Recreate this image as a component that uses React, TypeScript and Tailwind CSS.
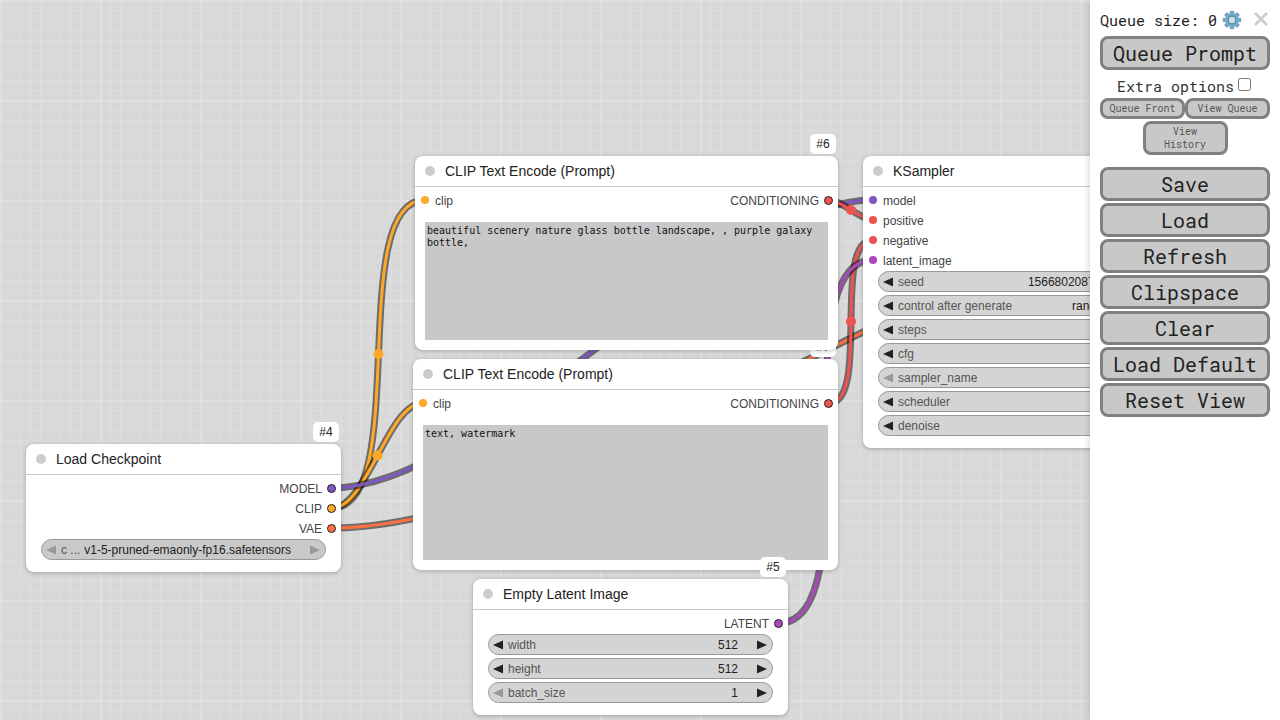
import React from "react";

const sans = "[font-family:'Liberation_Sans',Arial,sans-serif]";

function Arrow({ dir, off }: { dir: "l" | "r"; off?: boolean }) {
  return (
    <svg width="10" height="10" viewBox="0 0 10 10" className="shrink-0">
      <polygon points={dir === "l" ? "0,5 10,0.5 10,9.5" : "10,5 0,0.5 0,9.5"} fill={off ? "#999999" : "#222222"} />
    </svg>
  );
}

function Widget({ label, value, leftOff, rightOff, dark }: { label: string; value: string; leftOff?: boolean; rightOff?: boolean; dark?: boolean }) {
  return (
    <div className={`flex h-[21px] items-center rounded-full border border-[#999999] pl-[4px] pr-[5px] text-[12px] leading-none ${dark ? "bg-[#c9c9c9]" : "bg-[#d4d4d4]"}`}>
      <Arrow dir="l" off={leftOff} />
      <span className="ml-[5px] whitespace-nowrap text-[#555555]">{label}</span>
      <span className="ml-auto mr-[19px] whitespace-nowrap text-[#222222]">{value}</span>
      <Arrow dir="r" off={rightOff} />
    </div>
  );
}

function InSlot({ label, color }: { label: string; color: string }) {
  return (
    <div className="flex h-[20px] items-center gap-[6px] pl-[6px] text-[12px] text-[#444444]">
      <span className={`h-[8px] w-[8px] rounded-full ${color}`} />
      <span className="mt-[2px]">{label}</span>
    </div>
  );
}

function OutSlot({ label, color }: { label: string; color: string }) {
  return (
    <div className="flex h-[20px] items-center justify-end gap-[5px] pr-[5px] text-[12px] text-[#444444]">
      <span className="mt-[2px]">{label}</span>
      <span className={`h-[9px] w-[9px] rounded-full border border-[#222222] ${color}`} />
    </div>
  );
}

function Node({ id, title, className, children }: { id: string; title: string; className: string; children: React.ReactNode }) {
  return (
    <div className={`absolute rounded-[8px] bg-white shadow-[0_1px_4px_rgba(0,0,0,0.25)] ${sans} ${className}`}>
      <div className="absolute right-[2px] top-[-22px] flex h-[20px] w-[26px] items-center justify-center rounded-[5px] bg-white text-[12px] text-[#222222]">
        {id}
      </div>
      <div className="flex h-[31px] items-center gap-[10px] border-b border-[#c8c8c8] pl-[10px] text-[14px] text-[#222222]">
        <span className="h-[10px] w-[10px] rounded-full bg-[#cccccc]" />
        <span>{title}</span>
      </div>
      <div className="pt-[3px]">{children}</div>
    </div>
  );
}

function ClipBody({ text, heightClass }: { text: string; heightClass: string }) {
  return (
    <>
      <div className="grid grid-cols-2">
        <InSlot label="clip" color="bg-[#FFA726]" />
        <OutSlot label="CONDITIONING" color="bg-[#EF5350]" />
      </div>
      <div className={`mx-[10px] mb-[10px] mt-[12px] bg-[#c8c8c8] px-[2px] pt-[3px] [font-family:'DejaVu_Sans_Mono',monospace] text-[10px] leading-[12px] text-[#111111] ${heightClass}`}>
        {text}
      </div>
    </>
  );
}

function Link({ d, color, mid }: { d: string; color: string; mid?: [number, number] }) {
  return (
    <g fill="none">
      <path d={d} stroke="#000000" strokeOpacity="0.5" strokeWidth="7" />
      <path d={d} stroke={color} strokeWidth="3" />
      {mid && <circle cx={mid[0]} cy={mid[1]} r="5" fill={color} />}
    </g>
  );
}

function PanelButton({ children }: { children: React.ReactNode }) {
  return (
    <button className="h-[34px] w-[170px] rounded-[8px] border-[3px] border-[#808080] bg-[#c8c8c8] text-[20px] leading-none text-[#222222]">
      {children}
    </button>
  );
}

function SmallButton({ children, className }: { children: React.ReactNode; className: string }) {
  return (
    <button className={`w-[85px] rounded-[8px] border-[3px] border-[#808080] bg-[#c8c8c8] text-[10px] leading-[13px] text-[#555555] ${className}`}>
      {children}
    </button>
  );
}

function Gear() {
  const teeth = [0, 45, 90, 135];
  return (
    <svg width="20" height="20" viewBox="0 0 20 20" className="block">
      {teeth.map((a) => (
        <rect key={a} x="7.8" y="0.8" width="4.4" height="18.4" rx="0.8" fill="#74a9c6" transform={`rotate(${a} 10 10)`} />
      ))}
      <circle cx="10" cy="10" r="6.8" fill="#74a9c6" />
      <circle cx="10" cy="10" r="4.4" fill="#4f8aa9" />
      <circle cx="10" cy="10" r="3.2" fill="#cfe0ea" />
    </svg>
  );
}

function Close() {
  return (
    <svg width="14" height="14" viewBox="0 0 14 14" className="block">
      <path d="M1,1 L13,13 M13,1 L1,13" stroke="#cccccc" strokeWidth="2.6" fill="none" />
    </svg>
  );
}

export default function App() {
  return (
    <div className="flex h-[720px] w-[1280px] overflow-hidden bg-white">
      <div className="relative h-full w-[1090px] shrink-0 overflow-hidden bg-[#d8d8d8] [background-image:linear-gradient(to_right,#e0e0e0_2px,transparent_2px),linear-gradient(to_bottom,#e0e0e0_2px,transparent_2px),linear-gradient(to_right,#dddddd_1px,#dadada_1px,#dadada_2px,transparent_2px),linear-gradient(to_bottom,#dddddd_1px,#dadada_1px,#dadada_2px,transparent_2px)] [background-size:100px_100px,100px_100px,10px_10px,10px_10px]">
        <svg className="absolute left-0 top-0" width="1090" height="720">
          <Link d="M332,508 C412,508 345,200 425,200" color="#FFA726" mid={[378.5, 354]} />
          <Link d="M332,508 C367,508 388,403 423,403" color="#FFA726" mid={[377.5, 455.5]} />
          <Link d="M332,488 C485,488 720,200 873,200" color="#7E57C2" />
          <Link d="M332,528 C608,528 1094,148 1370,148" color="#FF7043" />
          <Link d="M829,200 C841,200 861,220 873,220" color="#EF5350" mid={[851, 210]} />
          <Link d="M829,403 C871,403 831,240 873,240" color="#EF5350" mid={[851, 321.5]} />
          <Link d="M779,623 C873,623 779,260 873,260" color="#AB47BC" />
        </svg>

        <Node id="#7" title="CLIP Text Encode (Prompt)" className="left-[413px] top-[359px] w-[425px]">
          <ClipBody text="text, watermark" heightClass="h-[135px]" />
        </Node>

        <Node id="#6" title="CLIP Text Encode (Prompt)" className="left-[415px] top-[156px] w-[423px]">
          <ClipBody text="beautiful scenery nature glass bottle landscape, , purple galaxy bottle," heightClass="h-[118px]" />
        </Node>

        <Node id="#3" title="KSampler" className="left-[863px] top-[156px] w-[315px]">
          <InSlot label="model" color="bg-[#7E57C2]" />
          <InSlot label="positive" color="bg-[#EF5350]" />
          <InSlot label="negative" color="bg-[#EF5350]" />
          <InSlot label="latent_image" color="bg-[#AB47BC]" />
          <div className="flex flex-col gap-[3px] px-[15px] pb-[12px] pt-[1px]">
            <Widget label="seed" value="156680208700286" />
            <Widget label="control after generate" value="randomize" />
            <Widget label="steps" value="20" />
            <Widget label="cfg" value="8.0" />
            <Widget label="sampler_name" value="euler" leftOff />
            <Widget label="scheduler" value="normal" />
            <Widget label="denoise" value="1.00" />
          </div>
        </Node>

        <Node id="#5" title="Empty Latent Image" className="left-[473px] top-[579px] w-[315px]">
          <OutSlot label="LATENT" color="bg-[#AB47BC]" />
          <div className="flex flex-col gap-[3px] px-[15px] pb-[12px] pt-[1px]">
            <Widget label="width" value="512" />
            <Widget label="height" value="512" />
            <Widget label="batch_size" value="1" leftOff />
          </div>
        </Node>

        <Node id="#4" title="Load Checkpoint" className="left-[26px] top-[444px] w-[315px]">
          <OutSlot label="MODEL" color="bg-[#7E57C2]" />
          <OutSlot label="CLIP" color="bg-[#FFA726]" />
          <OutSlot label="VAE" color="bg-[#FF7043]" />
          <div className="px-[15px] pb-[12px] pt-[1px]">
            <Widget label="c ..." value="v1-5-pruned-emaonly-fp16.safetensors" leftOff rightOff dark />
          </div>
        </Node>
      </div>

      <div className="z-10 flex h-full w-[190px] shrink-0 flex-col items-center bg-white px-[10px] pt-[8px] shadow-[0_0_8px_rgba(0,0,0,0.2)] [font-family:'Roboto_Mono','Noto_Sans_Mono','DejaVu_Sans_Mono',monospace] text-[#222222]">
        <div className="flex h-[24px] w-full items-center text-[15px]">
          <span className="whitespace-nowrap">Queue size: 0</span>
          <span className="ml-[5px]"><Gear /></span>
          <span className="ml-auto mr-[2px] -mt-[2px]"><Close /></span>
        </div>
        <div className="mt-[4px]"><PanelButton>Queue Prompt</PanelButton></div>
        <div className="mt-[7px] flex h-[19px] -translate-x-[1px] items-center gap-[4px] text-[15px] text-[#333333]">
          <span>Extra options</span>
          <input type="checkbox" className="mb-[4px] h-[13px] w-[13px]" />
        </div>
        <div className="mt-[2px] flex">
          <SmallButton className="h-[21px]">Queue Front</SmallButton>
          <SmallButton className="h-[21px]">View Queue</SmallButton>
        </div>
        <div className="mt-[2px]">
          <SmallButton className="h-[34px]">View<br />History</SmallButton>
        </div>
        <div className="mt-[12px] flex flex-col gap-[2px]">
          <PanelButton>Save</PanelButton>
          <PanelButton>Load</PanelButton>
          <PanelButton>Refresh</PanelButton>
          <PanelButton>Clipspace</PanelButton>
          <PanelButton>Clear</PanelButton>
          <PanelButton>Load Default</PanelButton>
          <PanelButton>Reset View</PanelButton>
        </div>
      </div>
    </div>
  );
}
